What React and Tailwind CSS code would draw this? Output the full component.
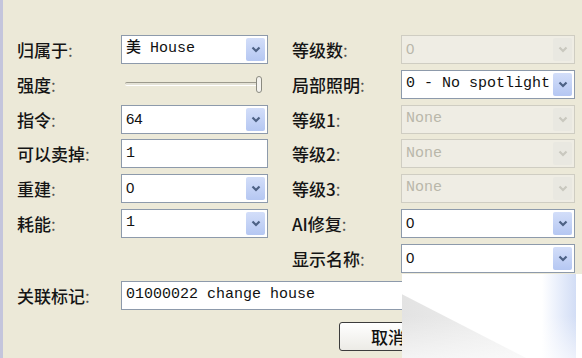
import React from "react";

const labelFont = { fontFamily: '"Noto Sans CJK SC", "Liberation Sans", sans-serif' };
const monoFont = { fontFamily: '"Liberation Mono", "Noto Sans CJK SC", monospace' };
const sansFont = { fontFamily: '"Liberation Sans", "Noto Sans CJK SC", sans-serif' };

const LEFT_ROWS = [
  { label: "归属于", kind: "combo", value: "美 House", font: monoFont },
  { label: "强度", kind: "slider" },
  { label: "指令", kind: "combo", value: "64", font: sansFont },
  { label: "可以卖掉", kind: "text", value: "1", font: monoFont },
  { label: "重建", kind: "combo", value: "0", font: sansFont },
  { label: "耗能", kind: "combo", value: "1", font: monoFont },
];

const RIGHT_ROWS = [
  { label: "等级数", kind: "combo", value: "0", font: sansFont, disabled: true },
  { label: "局部照明", kind: "combo", value: "0 - No spotlight", font: monoFont },
  { label: "等级1", kind: "combo", value: "None", font: monoFont, disabled: true },
  { label: "等级2", kind: "combo", value: "None", font: monoFont, disabled: true },
  { label: "等级3", kind: "combo", value: "None", font: monoFont, disabled: true },
  { label: "AI修复", kind: "combo", value: "0", font: sansFont },
  { label: "显示名称", kind: "combo", value: "0", font: sansFont },
];

function Chevron({ disabled }) {
  return (
    <svg width="10" height="7" viewBox="0 0 10 7">
      <polyline
        points="1.5,1.5 5,5 8.5,1.5"
        fill="none"
        stroke={disabled ? "#c9c8bf" : "#4d6185"}
        strokeWidth="2.2"
      />
    </svg>
  );
}

function Combo({ value, font, disabled }) {
  return (
    <div
      className={
        "flex h-full w-full items-stretch border p-[2px] " +
        (disabled ? "border-[#cfcdc2] bg-[#efede4]" : "border-[#8d9aab] bg-white")
      }
    >
      <div
        className={
          "flex flex-1 items-center overflow-hidden whitespace-nowrap pl-[2px] text-[15px] " +
          (disabled ? "text-[#b9b7aa]" : "font-medium text-[#111]")
        }
        style={font}
      >
        {value}
      </div>
      <div
        className={
          "flex w-[19px] shrink-0 items-center justify-center rounded-[2px] " +
          (disabled ? "bg-[#e9e8e1]" : "bg-gradient-to-b from-[#d3def9] to-[#b5c7f2]")
        }
      >
        <Chevron disabled={disabled} />
      </div>
    </div>
  );
}

function TextBox({ value, font }) {
  return (
    <div className="flex h-full w-full items-center border border-[#8d9aab] bg-white pl-[4px]">
      <span className="whitespace-nowrap text-[15px] font-medium text-[#111]" style={font}>
        {value}
      </span>
    </div>
  );
}

function Slider() {
  return (
    <div className="relative flex h-full w-full items-center pl-[4px] pr-[6px]">
      <div className="h-[4px] w-full rounded-full border-t border-[#9c9a8d] border-b border-b-white bg-[#e4e2d6]" />
      <div className="absolute right-[6px] top-[6px] h-[17px] w-[6px] rounded-[3px] border border-[#8a8a80] bg-[#f4f3ee]" />
    </div>
  );
}

function Field({ row }) {
  if (row.kind === "slider") return <Slider />;
  if (row.kind === "text") return <TextBox value={row.value} font={row.font} />;
  return <Combo value={row.value} font={row.font} disabled={row.disabled} />;
}

function Row({ row, labelW }) {
  return (
    <div className="flex h-[29px] items-center">
      <div
        className="shrink-0 text-[17px] font-medium leading-none text-[#151515]"
        style={{ ...labelFont, width: labelW }}
      >
        {row.label}
        <span className="font-normal text-[#555]">:</span>
      </div>
      <div className="h-full flex-1">
        <Field row={row} />
      </div>
    </div>
  );
}

export default function App() {
  return (
    <div className="relative h-[358px] w-[582px] overflow-hidden border-l-[3px] border-[#c4c5dc] bg-[#ece9d8]">
      <div className="pl-[14px] pt-[35px]">
        <div className="flex gap-[24px]">
          <div className="flex w-[251px] flex-col gap-[5.8px]">
            {LEFT_ROWS.map((r) => (
              <Row key={r.label} row={r} labelW={104} />
            ))}
          </div>
          <div className="flex w-[283px] flex-col gap-[5.8px]">
            {RIGHT_ROWS.map((r) => (
              <Row key={r.label} row={r} labelW={109} />
            ))}
          </div>
        </div>

        <div className="mt-[8px] flex h-[29px] items-center">
          <div className="w-[104px] shrink-0 text-[17px] font-medium leading-none text-[#151515]" style={labelFont}>
            关联标记<span className="font-normal text-[#555]">:</span>
          </div>
          <div className="h-full w-[454px]">
            <TextBox value="01000022 change house" font={monoFont} />
          </div>
        </div>

        <div className="mt-[12px] flex pl-[322px]">
          <button
            type="button"
            className="flex h-[29px] w-[98px] items-center justify-center rounded-[3px] border border-[#3c3c3c] bg-gradient-to-b from-white to-[#ecebe6] text-[17px] font-medium text-[#111]"
            style={labelFont}
          >
            取消
          </button>
        </div>
      </div>

      {/* watermark overlay in the lower right corner */}
      <div className="absolute bottom-0 left-[399px] right-0 top-[274px] bg-white">
        <div className="absolute inset-0 bg-gradient-to-r from-[#e3e3e3] to-[#f7f7f7] [clip-path:polygon(0_24%,0_100%,69%_100%)]" />
        <div className="absolute bottom-0 right-[6px] top-0 w-[34px] bg-gradient-to-r from-white/0 via-[#e8eefb] to-[#d2ddf5]" />
        <div className="absolute inset-0 bg-gradient-to-b from-white/0 via-white/0 to-white/60" />
      </div>
    </div>
  );
}
